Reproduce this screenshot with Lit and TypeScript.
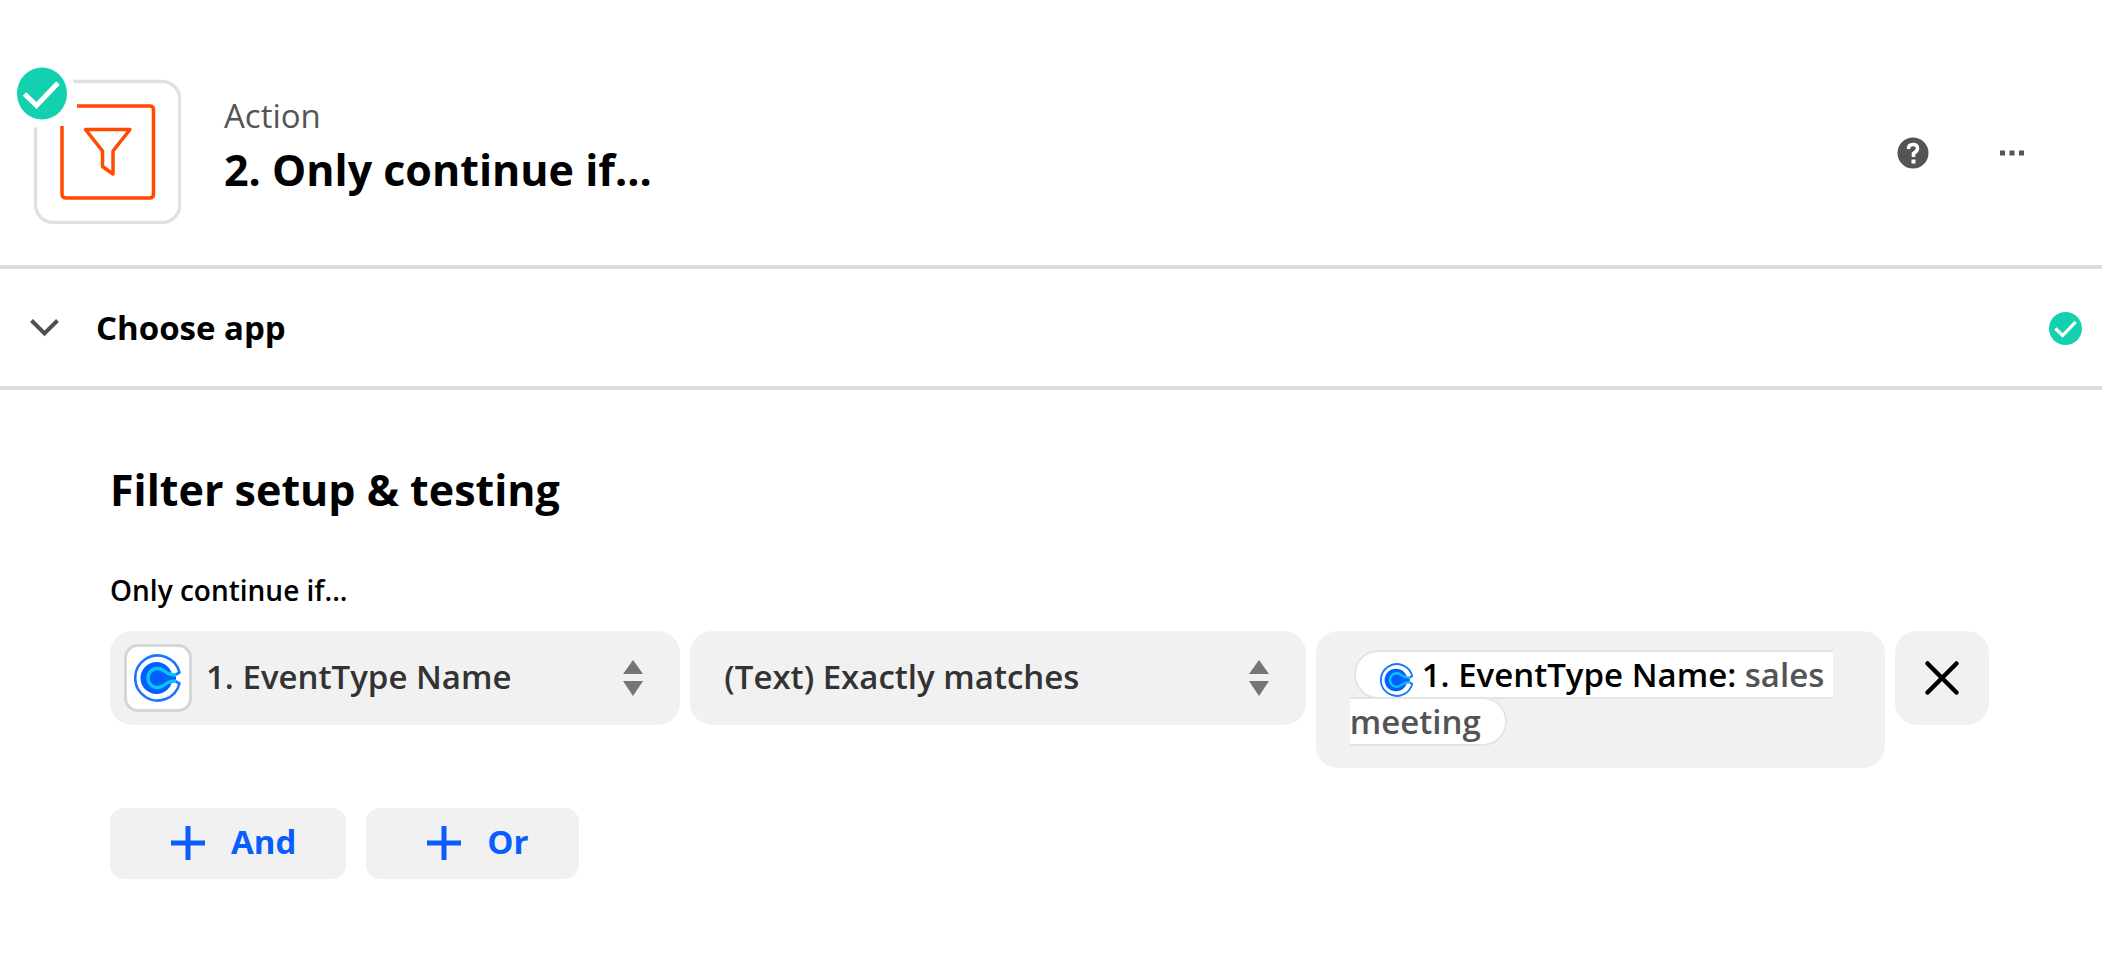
import { LitElement, html, css } from "lit";
import { customElement } from "lit/decorators.js";

const checkIcon = (cls: string) => html`
  <svg class=${cls} viewBox="0 0 52 52" role="img" aria-label="Complete">
    <circle cx="26" cy="26" r="26" fill="#13d0af" />
    <path d="M10 26 L21.500 37 L42 15.500" fill="none" stroke="#fff" stroke-width="5" />
  </svg>
`;

const brandIcon = (cls: string) => html`<svg class=${cls} viewBox="0 0 48 48" aria-hidden="true">
    <path
      d="M41 21 L45.500 18.500 A22.500 22.500 0 1 0 45.500 29.500 L41 27"
      fill="none" stroke="#1a75ff" stroke-width="2.600" stroke-linejoin="round" />
    <circle cx="22.500" cy="24" r="16" fill="#0060ff" />
    <path d="M32 17 L42 20.500 V27.500 L32 31 Z" fill="#0060ff" />
    <path
      d="M42 21 C36 21 34 20 31 17.500 C28 15 26 14.500 23.500 14.500 A9.500 9.500 0 0 0 23.500 33.500 C26 33.500 28 33 31 30.500 C34 28 36 27 42 27"
      fill="none" stroke="#0ac4f5" stroke-width="3.400" />
  </svg>`;

const sortIcon = html`
  <svg class="sort" viewBox="0 0 20 36" aria-hidden="true">
    <path d="M10 0 L20 14 H0 Z M0 21 H20 L10 36 Z" fill="#757575" />
  </svg>
`;

const plusIcon = html`
  <svg class="plus" viewBox="0 0 34 34" aria-hidden="true">
    <path d="M17 0 V34 M0 17 H34" stroke="#0a5cff" stroke-width="5" />
  </svg>
`;

@customElement("app-root")
export class AppRoot extends LitElement {
  static styles = css`
    :host {
      display: block;
      min-height: 100vh;
      background: #fff;
      color: #000;
      font-family: "Open Sans", "Noto Sans", sans-serif;
    }
    * {
      box-sizing: border-box;
    }
    h1, h2, p {
      margin: 0;
    }
    svg {
      display: block;
      flex: none;
    }
    button {
      display: flex;
      align-items: center;
      justify-content: center;
      margin: 0;
      padding: 0;
      border: 0;
      background: none;
      font: inherit;
      color: inherit;
      cursor: pointer;
    }

    .head {
      display: flex;
      align-items: center;
      padding: 64px 68px 41px 16px;
      border-bottom: 4px solid #ddd;
    }
    .app {
      width: 165px;
      height: 160px;
    }
    .titles {
      flex: 1;
      margin-left: 43px;
      padding-top: 6px;
    }
    .kind {
      font-size: 33px;
      line-height: 46px;
      color: #545454;
    }
    .title {
      font-size: 43px;
      line-height: 62px;
      font-weight: 700;
    }
    .tools {
      display: flex;
      align-items: center;
      gap: 55px;
      padding-top: 18px;
    }
    .tool {
      width: 44px;
      height: 44px;
    }

    .step {
      width: 100%;
      justify-content: flex-start;
      padding: 36px 20px 35px 30px;
      border-bottom: 4px solid #ddd;
      font-size: 33px;
      line-height: 46px;
      font-weight: 700;
      text-align: left;
    }
    .step-name {
      flex: 1;
      margin-left: 37px;
    }
    .step-check {
      width: 33px;
      height: 33px;
    }

    .body {
      padding: 70px 113px 0 110px;
    }
    .section {
      font-size: 43px;
      line-height: 60px;
      font-weight: 700;
    }
    .hint {
      margin-top: 50px;
      font-size: 28px;
      line-height: 40px;
      font-weight: 600;
    }
    .rule {
      display: grid;
      grid-template-columns: 570fr 615fr 569fr 94px;
      gap: 10px;
      align-items: start;
      margin-top: 21px;
    }
    .field {
      display: flex;
      align-items: center;
      height: 94px;
      padding: 0 37px 0 34px;
      border-radius: 22px;
      background: #f1f1f1;
    }
    .with-brand {
      padding-left: 14px;
    }
    .brand-tile {
      flex: none;
      padding: 7px;
      margin-right: 14px;
      border: 3px solid #d6d6d6;
      border-radius: 14px;
      background: #fff;
    }
    .brand {
      width: 48px;
      height: 48px;
    }
    .select {
      appearance: none;
      flex: 1;
      min-width: 0;
      height: 100%;
      padding: 0 0 4px;
      border: 0;
      outline: 0;
      background: none;
      font: inherit;
      font-size: 33px;
      font-weight: 600;
      color: #333;
    }
    .sort {
      width: 20px;
      height: 36px;
    }
    .value {
      padding: 20px 34px 23px;
      border-radius: 22px;
      background: #f1f1f1;
      font-size: 33px;
      line-height: 47px;
      outline: 0;
      white-space: pre-wrap;
    }
    .token {
      margin-left: 4px;
      padding: 0 24px;
      border: 2px solid #e4e4e4;
      border-radius: 24px;
      background: #fff;
      font-weight: 600;
      color: #545454;
    }
    .token-name {
      color: #000;
    }
    .token-brand {
      display: inline-block;
      width: 34px;
      height: 34px;
      margin-right: 8px;
      vertical-align: -10px;
    }
    .remove {
      height: 94px;
      border-radius: 22px;
      background: #f1f1f1;
    }

    .adders {
      display: flex;
      gap: 20px;
      margin-top: 40px;
    }
    .adder {
      gap: 26px;
      height: 71px;
      padding: 0 50px 2px 61px;
      border-radius: 14px;
      background: #f1f1f1;
      font-size: 33px;
      line-height: 44px;
      font-weight: 700;
      color: #0a5cff;
    }
    .adder-name {
      padding-bottom: 2px;
    }
    .plus {
      width: 34px;
      height: 34px;
    }
  `;

  render() {
    return html`
      <header class="head">
        <svg class="app" viewBox="16 64 165 160" role="img" aria-label="Filter, complete">
          <rect x="35.500" y="81.500" width="144.500" height="141" rx="18" fill="#fff" stroke="#e0e0e0" stroke-width="3.500" />
          <circle cx="42" cy="94" r="34" fill="#fff" />
          <path d="M77 106 H150 Q153.500 106 153.500 110 V194 Q153.500 198 149.500 198 H66.500 Q62 198 62 194 V126"
            fill="none" stroke="#ff4a00" stroke-width="3.500" />
          <path d="M85.500 129.500 H130 L113 151 V174 L102.500 166.500 V151 Z"
            fill="none" stroke="#ff4a00" stroke-width="3.500" stroke-linejoin="round" />
          <ellipse cx="42" cy="93.500" rx="25" ry="26" fill="#13d0af" />
          <path d="M24.500 94 L36.500 105.500 L58 83" fill="none" stroke="#fff" stroke-width="5" />
        </svg>
        <div class="titles">
          <p class="kind">Action</p>
          <h1 class="title">2. Only continue if...</h1>
        </div>
        <div class="tools">
          <button class="tool" type="button" aria-label="Help">
            <svg width="32" height="32" viewBox="0 0 32 32" aria-hidden="true">
              <circle cx="16" cy="16" r="15.500" fill="#545454" />
              <path d="M11.500 12 Q11.500 7.500 16 7.500 Q20.500 7.500 20.500 11.500 Q20.500 14 16.500 16.500 V20"
                fill="none" stroke="#fff" stroke-width="3.600" />
              <rect x="14.500" y="22.500" width="4" height="4" fill="#fff" />
            </svg>
          </button>
          <button class="tool" type="button" aria-label="More">
            <svg width="26" height="6" viewBox="0 0 26 6" aria-hidden="true">
              <path d="M1 0.500 H6 V5.500 H1 Z M10.500 0.500 H15.500 V5.500 H10.500 Z M20 0.500 H25 V5.500 H20 Z" fill="#545454" />
            </svg>
          </button>
        </div>
      </header>

      <button class="step" type="button" aria-expanded="false">
        <svg width="29" height="18" viewBox="0 0 29 18" aria-hidden="true">
          <path d="M1.500 1.500 L14.500 14.500 L27.500 1.500" fill="none" stroke="#505050" stroke-width="4" />
        </svg>
        <span class="step-name">Choose app</span>
        ${checkIcon("step-check")}
      </button>

      <main class="body">
        <h2 class="section">Filter setup &amp; testing</h2>
        <p class="hint" id="hint">Only continue if...</p>
        <div class="rule" role="group" aria-labelledby="hint">
          <label class="field with-brand">
            <span class="brand-tile">${brandIcon("brand")}</span>
            <select class="select" aria-label="Field">
              <option>1. EventType Name</option>
            </select>
            ${sortIcon}
          </label>
          <label class="field">
            <select class="select" aria-label="Condition">
              <option>(Text) Exactly matches</option>
            </select>
            ${sortIcon}
          </label>
          <div class="value" role="textbox" aria-label="Value" contenteditable="true"><span class="token">${brandIcon("token-brand")}<span class="token-name">1. EventType Name:</span> sales meeting</span></div>
          <button class="remove" type="button" aria-label="Remove">
            <svg width="36" height="36" viewBox="0 0 36 36" aria-hidden="true">
              <path d="M3.500 3.500 L32.500 32.500 M32.500 3.500 L3.500 32.500" stroke="#000" stroke-width="4.500" stroke-linecap="round" />
            </svg>
          </button>
        </div>
        <div class="adders">
          <button class="adder" type="button">${plusIcon}<span class="adder-name">And</span></button>
          <button class="adder" type="button">${plusIcon}<span class="adder-name">Or</span></button>
        </div>
      </main>
    `;
  }
}
